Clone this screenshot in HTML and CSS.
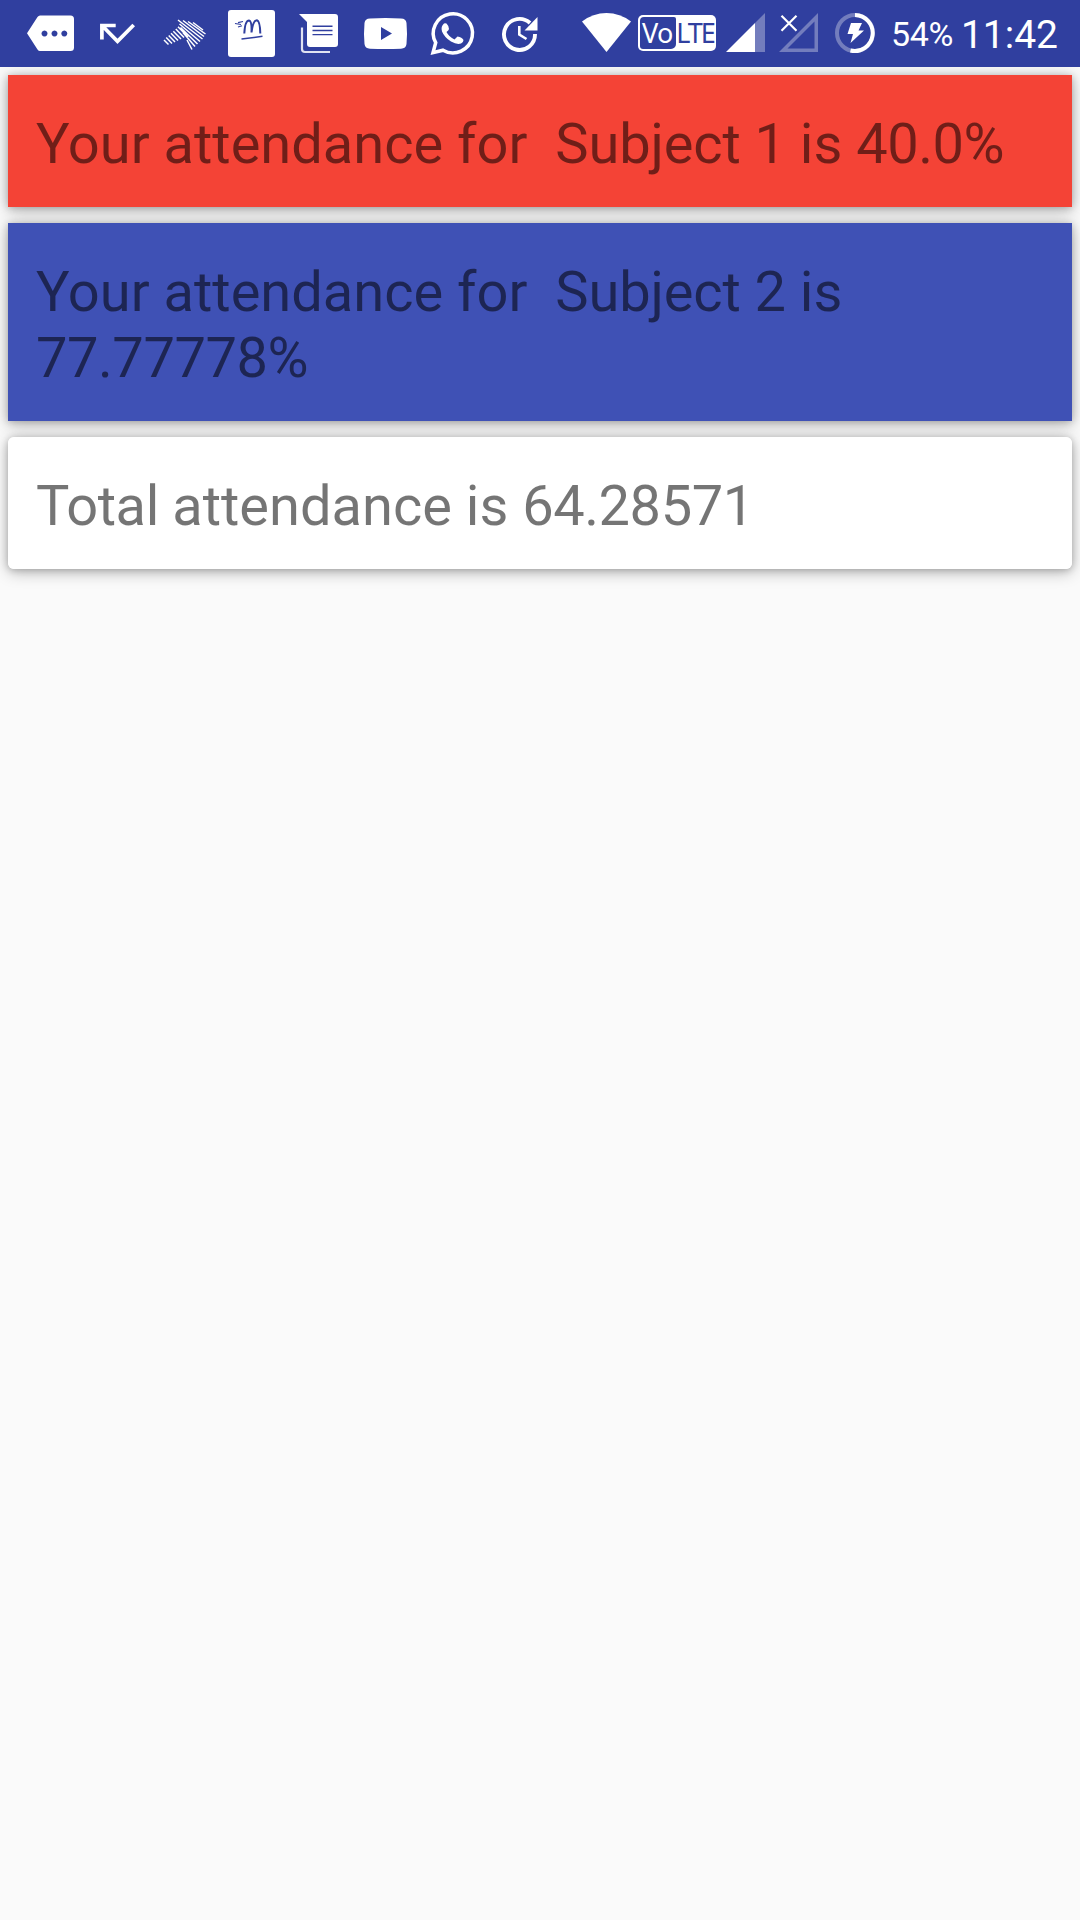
FILE: index.html
```html
<!DOCTYPE html>
<html lang="en">
<head>
<meta charset="utf-8">
<title>Attendance</title>
<link rel="stylesheet" href="styles.css">
</head>
<body>
<header class="status-bar">
  <div class="notifications">
    <svg class="note" viewBox="0 0 67 67"><path fill-rule="evenodd" d="M23 15.500H53.500Q57 15.500 57 19V47.500Q57 51 53.500 51H23Q21.500 51 20.500 49.500L10 33.300L20.500 17Q21.500 15.500 23 15.500ZM27.500 30.500a3 3 0 1 0 .01 0ZM37.500 30.500a3 3 0 1 0 .01 0ZM47.300 30.500a3 3 0 1 0 .01 0Z"/></svg>
    <svg class="note line" viewBox="0 0 67 67"><path stroke-width="3.700" d="M31.700 25.500H17.900V39.500M18.500 26L33.500 41.300L49.700 25"/></svg>
    <svg class="note line" viewBox="0 0 67 67"><path stroke-width="1.500" d="M13 40L17.500 44.500M15.200 37.500L21 43.500M17.700 35.500L24 42M20 33.300L27 40.500M22.300 31.300L30 39M24.800 29L33 37.500M27 26.800L37 37M27 20L51.500 39M32 20.500L53 36.500M37 21.500L54.500 34M42 22.500L52 30M28.500 24L49 41.500M29.500 27.500L46.500 44M32 32.500L44 46.500M36 40L41 49.500"/></svg>
    <svg class="note" viewBox="0 0 67 67"><rect x="10" y="10" width="47" height="47" rx="3"/><path class="ink" stroke-width="2" d="M26.300 33.500Q27 20.500 31 20.500Q34 21 33.500 32.500Q35 20 39 20.200Q42 21 42.300 33.500"/><path class="ink" stroke-width="1.500" d="M23.500 39L44.500 36.300"/><path class="ink" stroke-width="1.200" d="M20 22.700L25 21.500M17 23.500L23 24.500M20 27L24 25.700"/></svg>
    <svg class="note" viewBox="0 0 67 67"><path d="M14 14H50Q53 14 53 17V44Q53 47 50 47H25Q22 47 22 44V22Z"/><path class="pale" stroke-width="2.200" d="M17 27.500V49Q17 52 20 52H45"/><path class="ink" stroke-width="1.400" d="M27.500 26.300H47.500M27.500 30.500H47.500M27.500 34.600H47.500"/></svg>
    <svg class="note" viewBox="0 0 67 67"><path fill-rule="evenodd" d="M18 18.500Q33.500 17.500 49 18.500Q54 18.500 54.500 23Q55.500 33.500 54.500 44Q54 48.500 49 48.700Q33.500 49.500 18 48.700Q13 48.500 12.500 44Q11.500 33.500 12.500 23Q13 18.500 18 18.500ZM29 27V40L40 33.500Z"/></svg>
    <svg class="note" viewBox="0 0 67 67"><path class="line" stroke-width="3.500" d="M14 52.700L16.700 42.700A19.600 19.600 0 1 1 24 50.200Z"/><path d="M25 23.500Q26 23 27.500 23.500Q30 26 30 29Q30 30 27.500 32Q30 37 35.500 39.500L38.500 36.500Q43 37 44.500 40Q44.500 42 42 43.500Q38 45 32 41.500Q25.500 37.500 23 31.500Q21.500 26.500 25 23.500Z"/></svg>
    <svg class="note" viewBox="0 0 67 67"><path class="line" stroke-width="3.900" d="M44 23A15.500 15.500 0 1 0 49 34"/><path d="M51.500 17V30.500H38.500Z"/><path class="line" stroke-width="2.600" d="M33.300 26V34.500L40.500 39"/></svg>
  </div>
  <div class="system">
    <svg class="wifi" viewBox="0 0 49 67"><path d="M0 21.500Q11 13 24.500 13Q38 13 49 21.500L24.500 52Z"/></svg>
    <div class="volte"><span class="vo">Vo</span><span class="lte">LTE</span></div>
    <svg class="signal" viewBox="0 0 39 67"><path class="faint" d="M29 23L39 13V52H29Z"/><path d="M0 52L29 23V52Z"/></svg>
    <svg class="signal" viewBox="0 0 39 67"><path class="faint" fill-rule="evenodd" d="M39 13V52H0ZM35.500 21.500L8.500 48.500H35.500Z"/><path class="line" stroke-width="2.200" d="M2.500 15.700L17.500 30.700M17.500 15.700L2.500 30.700"/></svg>
    <svg class="battery" viewBox="0 0 40 67"><circle class="track" cx="20" cy="33" r="18"/><path class="line" stroke-width="4" d="M20 15A18 18 0 1 1 15.500 50.500"/><path d="M16 23H27L23.500 30.500H29L15.500 43L18 34H12.500Z"/></svg>
    <span class="percent">54%</span>
    <time class="clock">11:42</time>
  </div>
</header>
<main class="cards">
  <section class="card low">Your attendance for&nbsp; <span class="number">Subject 1</span> is <span class="number">40.0%</span></section>
  <section class="card good">Your attendance for&nbsp; <span class="number">Subject 2</span> is <span class="number">77.77778%</span></section>
  <section class="card total"><span class="number">Total </span>attendance is <span class="number">64.28571</span></section>
</main>
</body>
</html>
```

FILE: styles.css
```css
* { box-sizing: border-box; }

body {
  margin: 0;
  min-height: 1920px;
  background: #fafafa;
  font-family: Roboto, sans-serif;
}

.status-bar {
  position: relative;
  z-index: 1;
  display: flex;
  justify-content: space-between;
  height: 67px;
  padding: 0 22px 0 17px;
  background: #303f9f;
  color: #fff;
}

.notifications,
.system {
  display: flex;
}

svg {
  display: block;
  flex: none;
  height: 67px;
  fill: #fff;
}

.note { width: 67px; }
.line { fill: none; stroke: #fff; }
.ink { fill: none; stroke: #303f9f; }
.pale { fill: none; stroke: #e0e2f1; }
.faint { fill: #737dbd; }
.track { fill: none; stroke: #737dbd; stroke-width: 4; }

.wifi { width: 49px; }
.signal { width: 39px; margin-right: 14px; }
.battery { width: 40px; margin: 0 16px 0 3px; }

.volte {
  display: flex;
  width: 78px;
  height: 36px;
  margin: 15px 10px 0 7px;
  padding: 2px;
  border-radius: 5px;
  background: #fff;
  font: 27px/32px "Noto Sans", sans-serif;
}

.vo {
  width: 37px;
  border-radius: 4px 2px 5px 3px;
  padding-left: 2px;
  background: #303f9f;
  letter-spacing: -0.5px;
}

.lte {
  color: #303f9f;
  letter-spacing: -2px;
}

.percent {
  width: 70px;
  font-size: 34px;
  line-height: 68px;
  letter-spacing: -0.3px;
}

.clock {
  font-size: 39px;
  line-height: 70px;
}

.cards {
  display: flex;
  flex-direction: column;
  gap: 16px;
  padding: 8px;
  isolation: isolate;
}

.card {
  position: relative;
  padding: 36px 28px 30px;
  font-size: 56px;
  line-height: 66px;
  color: rgba(0, 0, 0, 0.54);
}

/* Shadows sit on a layer beneath every card so they never tint a neighbour. */
.card::before {
  content: "";
  position: absolute;
  inset: 0;
  z-index: -1;
  border-radius: inherit;
  box-shadow: 0 3px 16px rgba(0, 0, 0, 0.28), 0 1px 7px rgba(0, 0, 0, 0.2);
}

.number { letter-spacing: -0.45px; }
.low .number:first-child,
.good .number:first-child { letter-spacing: -0.12px; }

.low { background: #f44336; }
.good { background: #3f51b5; }
.total { background: #fff; border-radius: 6px; }
```
